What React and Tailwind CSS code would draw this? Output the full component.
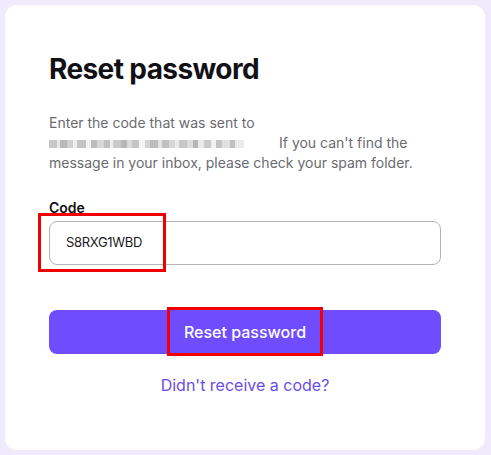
import React from "react";

const blocks = [
  ["#c8c8c8", 8], ["#e6e6e6", 3], ["#b9b9b9", 7], ["#d0d0d0", 6], ["#eeeeee", 4], ["#c4c4c4", 9], ["#f4f4f4", 5],
  ["#bdbdbd", 6], ["#d8d8d8", 7], ["#c2c2c2", 6], ["#ededed", 3], ["#c9c9c9", 8], ["#b8b8b8", 6], ["#dadada", 5],
  ["#c6c6c6", 7], ["#f5f5f5", 6], ["#d2d2d2", 5], ["#bcbcbc", 8], ["#e4e4e4", 4], ["#c0c0c0", 7], ["#d6d6d6", 6],
  ["#ececec", 4], ["#c7c7c7", 8], ["#dddddd", 6], ["#b7b7b7", 5], ["#e9e9e9", 6], ["#cacaca", 7], ["#f0f0f0", 5],
  ["#c3c3c3", 6], ["#e0e0e0", 8], ["#bfbfbf", 5], ["#ebebeb", 9],
];

export default function App() {
  return (
    <div
      className="w-[491px] h-[455px] bg-[#efebfd] p-[5px] relative"
      style={{ fontFamily: "Inter, 'Noto Sans', sans-serif" }}
    >
      <div className="w-[480px] h-[445px] bg-white rounded-[12px] px-[44px] pt-[47px] flex flex-col">
        <h1 className="text-[28px] leading-[34px] font-bold text-[#111116] tracking-[-0.6px]">Reset password</h1>
        <p className="mt-[27px] text-[14px] leading-[20px] text-[#6b6b70]">
          Enter the code that was sent to{" "}
          <span className="inline-flex align-middle h-[8px] w-[226px] mr-[4px] overflow-hidden">
            {blocks.map(([c, w], i) => (
              <span key={i} style={{ background: c, width: w }} className="h-full shrink-0" />
            ))}
          </span>
          If you can't find the message in your inbox, please check your spam folder.
        </p>
        <label className="mt-[25px] text-[14px] leading-[20px] font-semibold text-[#111116]">Code</label>
        <div className="mt-[3px] h-[44px] rounded-[8px] border border-[#b4b4b8] flex items-center px-[16px] text-[13px] tracking-[-0.3px] text-[#1a1a1e]">
          S8RXG1WBD
        </div>
        <button className="mt-[45px] h-[44px] rounded-[8px] bg-[#704cff] text-white text-[16px] font-medium">
          Reset password
        </button>
        <div className="mt-[21px] text-center text-[16px] leading-[20px] text-[#6c4cea]">Didn't receive a code?</div>
      </div>
      <div className="absolute left-[38px] top-[213px] w-[128px] h-[59px] border-[3px] border-[#f00000]" />
      <div className="absolute left-[167px] top-[307px] w-[156px] h-[49px] border-[3px] border-[#f00000]" />
    </div>
  );
}
